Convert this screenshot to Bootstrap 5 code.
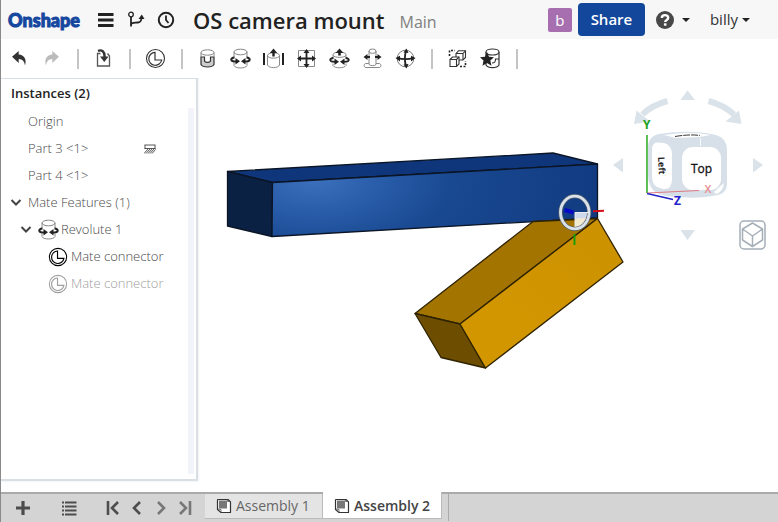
<!DOCTYPE html>
<html lang="en">
<head>
<meta charset="utf-8">
<meta name="viewport" content="width=device-width, initial-scale=1">
<title>OS camera mount</title>
<link href="https://cdn.jsdelivr.net/npm/bootstrap@5.3.0/dist/css/bootstrap.min.css" rel="stylesheet">
<style>
body{font-family:"Open Sans","Noto Sans",sans-serif;font-size:14px;color:#333;background:#fff;border-left:1px solid #8a8a8a;overflow:hidden}
button{font:inherit}
svg{display:block;flex:none}
.plain{border:0;background:none;padding:0;color:inherit;display:flex;align-items:center;justify-content:center}
.topbar{height:39px;background:#f7f7f7;padding:0 28px 0 7px}
.brand{font-family:Lato,"Open Sans",sans-serif;font-weight:900;font-size:18px;line-height:24px;color:#15479e;text-decoration:none;-webkit-text-stroke:1px #15479e;width:83px}
.topbar .hicon{width:30px;height:30px}
.doc-title{font-size:22px;line-height:32px;font-weight:600;color:#222;margin:0 0 0 12px}
.branch{font-size:16px;line-height:20px;color:#808080;margin:4px 0 0 15px}
.avatar{width:24px;height:24px;border-radius:2px;background:#a76fb0;color:#fff;font-size:15px;line-height:24px;text-align:center}
.share{width:67px;height:33px;border-radius:4px;background:#12479b;color:#fff;font-size:15px;font-weight:600;margin:0 11px 0 6px}
.user{font-size:15px;margin-left:20px}
.caret{width:0;height:0;border:4px solid transparent;border-top-color:#222;border-bottom:0}
.tools{height:39px;padding-left:1px}
.tool{width:33px;height:33px}
.split{width:19px;height:20px;display:flex;justify-content:center}
.split::before{content:"";width:2px;background:#c4c4c4}
.panel{width:197px;margin-bottom:11px;border:1px solid #dadfe4;border-width:1px 2px 2px 0;box-shadow:0 0 2px #dde4ea;padding-bottom:5px}
.panel h2{font-size:13px;line-height:29px;font-weight:600;color:#222;margin:0;padding-left:10px}
.track{width:6px;background:#f2f4f9;margin-right:2px}
.tree{font-weight:300;font-size:13px;line-height:27px;color:#4a4a4a}
.tree li{height:27px}
.lvl1{padding-left:27px}
.group1{padding-left:9px}
.group2{padding-left:19px}
.lvl3{padding-left:45px;gap:1px}
.chev{width:12px;height:20px;margin-right:6px}
.off{color:#a0a0a0}
.grounded{margin-left:auto;margin-right:32px}
.cube{position:absolute;top:0;right:0}
.iso{position:absolute;top:142px;right:12px}
.bottombar{height:30px;background:#d4d4d4;border-top:2px solid #aaa;color:#555}
.bottombar .nav-b{width:24px;height:28px}
.sheet{height:25px;border:0;border-right:1px solid #bbb;border-bottom:1px solid #bbb;background:#e4e4e4;color:#666;font-size:14px;line-height:20px;padding:0 0 0 11px;gap:4px}
.sheet.current{height:27px;margin-top:-2px;background:#fff;color:#444;font-weight:600;padding-top:2px}
.s1{width:118px}.s2{width:119px}
.endline{width:1px;height:27px;background:#aaa;margin-left:6px}
</style>
</head>
<body class="d-flex flex-column vh-100">
<svg width="0" height="0" class="position-absolute" aria-hidden="true">
<defs>
<symbol id="mateconn" viewBox="0 0 25 25"><g fill="none" stroke="currentColor"><circle cx="12.5" cy="12.5" r="9" stroke-width="1.1"/><path d="M12 6.300A6.500 6.500 0 1 0 18.700 14H12Z" stroke-width="1.200"/></g></symbol>
<symbol id="revolute" viewBox="0 0 25 25"><g fill="none" stroke="#888"><ellipse cx="12.5" cy="6" rx="6.500" ry="2.800"/><path d="M6 6V11M19 6V11M6 17V19.500C7 22.800 18 22.800 19 19.500V17"/></g><path d="M6.500 11.500C2 12 2 15.500 8 15.500M18.500 11.500C23 12 23 15.500 17 15.500" fill="none" stroke="#222" stroke-width="2"/><path d="M7.500 12L12 15.300L7.500 18.500ZM17.500 12L13 15.300L17.500 18.500Z" fill="#222"/></symbol>
<symbol id="sheeticon" viewBox="0 0 16 16"><path d="M2 1.500H12L14.500 4V14.500H5L1.500 11.500V2Z" fill="#fff" stroke="#333" stroke-width="1.200" stroke-linejoin="round"/><path d="M3 2.500H11V10.500H3Z" fill="#777"/><path d="M2 11L5 11.500V14.500M11.500 2V3.500H14" fill="none" stroke="#555" stroke-width=".8"/></symbol>
</defs>
</svg>

<header class="topbar d-flex align-items-center flex-shrink-0">
  <a class="brand" href="#">Onshape</a>
  <button class="plain hicon" aria-label="Menu"><svg width="16" height="16" viewBox="0 0 16 16"><path d="M0 2.500H15.500M0 8H15.500M0 13.500H15.500" stroke="#222" stroke-width="3"/></svg></button>
  <button class="plain hicon" aria-label="Versions"><svg width="18" height="18" viewBox="0 0 18 18"><g fill="none" stroke="#222" stroke-width="1.800"><circle cx="4" cy="3.500" r="2.300" stroke-width="1.300"/><path d="M4 6V15.500M4 14C4 11 8 12 11 11.500C14 11 14.500 9.500 14.500 6"/></g><path d="M11.500 8L14.800 3.500L17.500 8Z" fill="#222"/></svg></button>
  <button class="plain hicon" aria-label="History"><svg width="18" height="18" viewBox="0 0 18 18"><circle cx="9" cy="9" r="7.200" fill="none" stroke="#222" stroke-width="2"/><path d="M9 4.500V9L11.500 12" fill="none" stroke="#222" stroke-width="1.800"/></svg></button>
  <h1 class="doc-title">OS camera mount</h1>
  <span class="branch">Main</span>
  <div class="d-flex align-items-center ms-auto">
    <span class="avatar">b</span>
    <button class="plain share">Share</button>
    <button class="plain" aria-label="Help"><svg width="18" height="18" viewBox="0 0 18 18"><circle cx="9" cy="9" r="9" fill="#484848"/><path d="M5.800 7C5.800 3.200 12.200 3.200 12.200 6.800C12.200 9 9.200 8.800 9.200 11" fill="none" stroke="#fff" stroke-width="2.400"/><path d="M7.900 12.300H10.500V14.700H7.900Z" fill="#fff"/></svg><span class="caret ms-2"></span></button>
    <button class="plain user">billy<span class="caret ms-1"></span></button>
  </div>
</header>

<div class="tools d-flex align-items-center flex-shrink-0" role="toolbar" aria-label="Assembly tools">
  <button class="plain tool" aria-label="Undo"><svg width="25" height="25" viewBox="0 0 25 25"><path d="M6 10.700L12.700 5V8.500C18 9 21 13 19 19.500C18.500 15.500 16.500 13.300 12.700 13.100V17Z" fill="#333"/></svg></button>
  <button class="plain tool" aria-label="Redo"><svg width="25" height="25" viewBox="0 0 25 25"><path d="M20 10.700L13.300 5V8.500C8 9 5 13 7 19.500C7.500 15.500 9.500 13.300 13.300 13.100V17Z" fill="#bbb"/></svg></button>
  <span class="split"></span>
  <button class="plain tool" aria-label="Insert"><svg width="25" height="25" viewBox="0 0 25 25"><path d="M9.500 7.500H6.500V20H18.500V10L16.500 7.500" fill="none" stroke="#555" stroke-width="1.300"/><path d="M7 4.800C11 3.500 13.500 5.500 13.500 10V11" fill="none" stroke="#333" stroke-width="2.400"/><path d="M9 10.500H17.500L13.300 16Z" fill="#333"/></svg></button>
  <span class="split"></span>
  <button class="plain tool" aria-label="Mate connector"><svg width="25" height="25"><use href="#mateconn"/></svg></button>
  <span class="split"></span>
  <button class="plain tool" aria-label="Fastened mate"><svg width="25" height="25" viewBox="0 0 25 25"><path d="M6 11H9.500V14.500C9.500 17 15.500 17 15.500 14.500V11H19V18.500C17 21.800 8 21.800 6 18.500Z" fill="#ccc" stroke="#333" stroke-width="1.200"/><path d="M6 6.500V11M19 6.500V11" stroke="#888"/><ellipse cx="12.500" cy="6.500" rx="6.500" ry="2.700" fill="none" stroke="#888"/></svg></button>
  <button class="plain tool" aria-label="Revolute mate"><svg width="25" height="25"><use href="#revolute"/></svg></button>
  <button class="plain tool" aria-label="Slider mate"><svg width="25" height="25" viewBox="0 0 25 25"><path d="M3 7V19M22 7V19" stroke="#222" stroke-width="2"/><path d="M6.500 9.500V19C8 22.500 17 22.500 18.500 19V9.500" fill="none" stroke="#888"/><ellipse cx="12.500" cy="9.500" rx="6" ry="2.700" fill="none" stroke="#888"/><path d="M8.800 7L12.500 2.500L16.200 7H13.700V10.500H11.300V7Z" fill="#222"/></svg></button>
  <button class="plain tool" aria-label="Planar mate"><svg width="25" height="25" viewBox="0 0 25 25"><path d="M4.500 4.500H20.500V20.500H4.500Z" fill="none" stroke="#888"/><path d="M12.500 5V20M5 12.500H20" stroke="#222" stroke-width="1.800"/><path d="M12.500 3L15.500 7H9.500ZM12.500 22L15.500 18H9.500ZM3 12.500L7 9.500V15.500ZM22 12.500L18 9.500V15.500Z" fill="#222"/></svg></button>
  <button class="plain tool" aria-label="Cylindrical mate"><svg width="25" height="25" viewBox="0 0 25 25"><g fill="none" stroke="#888"><path d="M9 6.500C7 7 6 7.500 6 9V11.500M16 6.500C18 7 19 7.500 19 9V11.500M6 9.500C8 12 17 12 19 9.500M6 17.500V19.500C7.500 22.500 17.500 22.500 19 19.500V17.500"/></g><path d="M6.500 12C2 12.500 2 15.800 8 15.800M18.500 12C23 12.500 23 15.800 17 15.800" fill="none" stroke="#222" stroke-width="2"/><path d="M7.500 12.500L12 15.700L7.500 19ZM17.500 12.500L13 15.700L17.500 19ZM8.500 7L12.500 2.500L16.500 7H13.800V9.500H11.200V7Z" fill="#222"/></svg></button>
  <button class="plain tool" aria-label="Pin slot mate"><svg width="25" height="25" viewBox="0 0 25 25"><g fill="none" stroke="#888"><path d="M9 17.500H6C3.500 17.500 3.500 21.500 6 21.500H19C21.500 21.500 21.500 17.500 19 17.500H16"/><path d="M9 5V18.500C10 20 15 20 16 18.500V5"/><ellipse cx="12.500" cy="5.200" rx="3.500" ry="2.200"/></g><path d="M5 11H10M15 11H20" stroke="#222" stroke-width="1.800"/><path d="M3.500 11L7.500 8V14ZM21.500 11L17.500 8V14Z" fill="#222"/></svg></button>
  <button class="plain tool" aria-label="Ball mate"><svg width="25" height="25" viewBox="0 0 25 25"><circle cx="12.500" cy="12.500" r="8.300" fill="none" stroke="#777"/><path d="M13 5C11.500 9 11.500 16 13 20M5 12C9 13.500 16 13.500 20 12" fill="none" stroke="#222" stroke-width="1.800"/><path d="M13.500 2.500L15.500 7L10.500 6.500ZM13.500 22.500L10.500 18.500L15.500 18ZM2.500 12L7 9.700V15.500ZM22.500 12L18 9.700V15.500Z" fill="#222"/></svg></button>
  <span class="split"></span>
  <button class="plain tool" aria-label="Group"><svg width="25" height="25" viewBox="0 0 25 25"><path d="M4.500 10V4.500H10M15 20.500H20.500V15" fill="none" stroke="#222" stroke-width="1.600" stroke-dasharray="2 1.500"/><g fill="#fff" stroke="#333" stroke-width="1.100"><path d="M11 7.500L13.500 4.800H20.500V11.500L18 14H11Z"/><path d="M11 7.500H18V14M18 7.500L20.500 4.800" fill="none"/><path d="M5 13.500L7.500 11H14V18L11.500 20.500H5Z"/><path d="M5 13.500H11.500V20.500M11.500 13.500L14 11" fill="none"/></g></svg></button>
  <button class="plain tool" aria-label="Mate favourites"><svg width="25" height="25" viewBox="0 0 25 25"><g fill="#fff" stroke="#333" stroke-width="1.200"><path d="M8 6V19C10 22.500 19 22.500 21 19V6"/><ellipse cx="14.500" cy="6" rx="6.500" ry="3"/><path d="M14 17C17 17 17.500 16 17.500 13H21" fill="none"/></g><path d="M9 6L11 10.700L16 11.200L12.300 14.500L13.500 19.800L9 17L4.500 19.800L5.500 14.500L2 11.200L7 10.700Z" fill="#222"/></svg></button>
  <span class="split"></span>
</div>

<main class="d-flex flex-grow-1 overflow-hidden">
  <aside class="panel d-flex flex-column flex-shrink-0">
    <h2>Instances (2)</h2>
    <div class="d-flex flex-grow-1">
      <ul class="tree list-unstyled flex-grow-1 mb-0">
        <li class="lvl1">Origin</li>
        <li class="lvl1 d-flex align-items-center">Part 3 &lt;1&gt;<svg class="grounded" width="12" height="10" viewBox="0 0 12 10"><path d="M.5 1H11.500M.5 4.500H11.500M1 1V5M11 1V5M0 9.500L4 5M4 9.500L8 5M8 9.500L11.500 5.500M2 9.500L6 5M6 9.500L10 5" stroke="#444" stroke-width=".9"/></svg></li>
        <li class="lvl1">Part 4 &lt;1&gt;</li>
        <li class="group1 d-flex align-items-center"><button class="plain chev" aria-label="Collapse"><svg width="12" height="8" viewBox="0 0 12 8"><path d="M1.500 1L6 5.500L10.500 1" fill="none" stroke="#444" stroke-width="2"/></svg></button>Mate Features (1)</li>
        <li class="group2 d-flex align-items-center"><button class="plain chev me-0" aria-label="Collapse"><svg width="12" height="8" viewBox="0 0 12 8"><path d="M1.500 1L6 5.500L10.500 1" fill="none" stroke="#444" stroke-width="2"/></svg></button><svg class="ms-1" width="25" height="25"><use href="#revolute"/></svg>Revolute 1</li>
        <li class="lvl3 d-flex align-items-center"><svg width="24" height="24" class="text-black"><use href="#mateconn"/></svg>Mate connector</li>
        <li class="lvl3 d-flex align-items-center off"><svg width="24" height="24"><use href="#mateconn"/></svg>Mate connector</li>
      </ul>
      <div class="track"></div>
    </div>
  </aside>

  <section class="flex-grow-1 position-relative overflow-hidden" aria-label="Model view">
    <svg class="w-100 h-100" viewBox="198 78 580 413" preserveAspectRatio="xMinYMin meet">
      <defs>
        <radialGradient id="blueface" gradientUnits="userSpaceOnUse" cx="315" cy="180" r="300" gradientTransform="translate(0 90) scale(1 .5)"><stop offset="0" stop-color="#3c70bd"/><stop offset=".2" stop-color="#2a5eab"/><stop offset=".45" stop-color="#194991"/><stop offset="1" stop-color="#113a80"/></radialGradient>
        <linearGradient id="goldface" x1="0" x2="1" y1="1" y2="0"><stop offset="0" stop-color="#d39800"/><stop offset="1" stop-color="#cc9100"/></linearGradient>
      </defs>
      <g stroke="#0b1526" stroke-width="1.300" stroke-linejoin="round">
        <path d="M227.500 171.500L553 153L597.500 164L272.500 182.500Z" fill="#0f367a"/>
        <path d="M227.500 171.500L272.500 182.500L272 236.500L227.500 226Z" fill="#0b2144"/>
        <path d="M272.500 182.500L597.500 164V218L272 236.500Z" fill="url(#blueface)"/>
      </g>
      <g stroke="#2e2200" stroke-width="1.300" stroke-linejoin="round">
        <path d="M533 221.500L597.500 218.500L460 324L415 313.500Z" fill="#a37400"/>
        <path d="M415 313.500L460 324L485.500 368L441 357.500Z" fill="#6d4e00"/>
        <path d="M460 324L597.500 218.500L623 262L485.500 368Z" fill="url(#goldface)"/>
      </g>
      <path d="M575 212H589C589 221 583 228 575 228Z" fill="#f2ead0"/><path d="M575 212H589L588 218L575 218.500Z" fill="#cfd9ec"/>
      <ellipse cx="574.800" cy="212.500" rx="14.300" ry="16.300" fill="none" stroke="#56616d" stroke-width="4.200"/>
      <ellipse cx="574.800" cy="212.500" rx="14.300" ry="16.300" fill="none" stroke="#d9e1ea" stroke-width="2.800"/>
      <path d="M575 227V212.500H589" fill="none" stroke="#e8edf2"/>
      <path d="M564.500 210L573.500 212.500" stroke="#0808c8" stroke-width="4"/>
      <path d="M593 211.300L604 210.700" stroke="#d40d16" stroke-width="2"/>
      <path d="M574.500 234V245" stroke="#1c9c0a" stroke-width="2"/>
    </svg>

    <svg class="cube" width="168" height="172" viewBox="610 78 168 172" font-family="Open Sans, sans-serif" aria-label="View cube">
      <path d="M687.500 90.500L695 100H680.500ZM687.500 240L695 230H680.500ZM613 165L623 158V172.500ZM763 165L753 158V172.500Z" fill="#dae3ea"/>
      <path d="M667.500 101C656 104 648 109 642.500 114.500M708.500 101C720 104 728 109 734 114.500" fill="none" stroke="#dae3ea" stroke-width="6"/>
      <path d="M634 124L636.500 110.500L650 121.500ZM741.500 124L739 110.500L725.500 121.500Z" fill="#dae3ea"/>
      <path d="M659 134Q690 129 716 135Q727 138 727 150V185Q726 193 718 195Q700 199 680 197Q660 197 653 190Q648 184 648 175V148Q648 136 659 134Z" fill="#d7e0e9"/>
      <path d="M664 135Q690 131 711 135L699 137L676 138Z" fill="#fff"/>
      <path d="M675 136.500Q690 134 700 135.500" fill="none" stroke="#333" stroke-dasharray="7 1"/>
      <path d="M700.500 138V146" stroke="#f7fafc"/>
      <path d="M658 142.500L664 143Q672 145 672 155V179Q672 190 663 189L657 187Q652 184 652 176V150Q652 142 658 142.500Z" fill="#fff"/>
      <rect x="682" y="147" width="39" height="43" rx="11" fill="#fff"/>
      <path d="M714 192L724 183Q723 192 716 194Z" fill="#fff"/>
      <text x="691" y="173" font-size="12" fill="#111" stroke="#111" stroke-width=".3">Top</text>
      <text transform="translate(658 157) rotate(87)" font-size="9" font-weight="700" fill="#222">Left</text>
      <path d="M647 135V193" stroke="#35b02c" stroke-width="1.600"/><path d="M647 193L699 190.500" stroke="#de7b82"/><path d="M647 193.500L673 199.500" stroke="#2323c8" stroke-width="1.400"/>
      <text x="643" y="129" font-size="12" font-weight="700" fill="#18a018">Y</text>
      <text x="704.500" y="193" font-size="11" font-weight="600" fill="#e58a8e">X</text>
      <text x="674" y="205" font-size="12" font-weight="700" fill="#2222cf">Z</text>
    </svg>
    <button class="plain iso" aria-label="Named views"><svg width="27" height="30" viewBox="0 0 27 30"><g fill="none" stroke="#a6afb8" stroke-width="1.500" stroke-linejoin="round"><rect x="1" y="1" width="25" height="28" rx="4"/><path d="M13.500 3L23.500 9V20L13.500 26.500L3.500 20V9ZM3.500 9L13.500 16L23.500 9M13.500 16V26.500"/></g></svg></button>
  </section>
</main>

<footer class="bottombar d-flex flex-shrink-0">
  <button class="plain nav-b ms-2 me-4" aria-label="Add tab"><svg class="ms-1" width="16" height="16" viewBox="0 0 16 16"><path d="M8 1V15M1 8H15" stroke="#4d4d4d" stroke-width="3.200"/></svg></button>
  <button class="plain nav-b me-3" aria-label="Tab list"><svg width="16" height="16" viewBox="0 0 16 16"><path d="M1 2.500H15.500M1 6.500H15.500M1 10.500H15.500M1 14.500H15.500" stroke="#4d4d4d" stroke-width="2"/><path d="M3.500 1V16" stroke="#d4d4d4"/></svg></button>
  <div class="d-flex ms-1">
    <button class="plain nav-b" aria-label="First"><svg width="14" height="16" viewBox="0 0 14 16"><path d="M2 1V15M12 2L6 8L12 14" fill="none" stroke="#4d4d4d" stroke-width="2.600"/></svg></button>
    <button class="plain nav-b" aria-label="Previous"><svg width="14" height="16" viewBox="0 0 14 16"><path d="M10 2L4 8L10 14" fill="none" stroke="#4d4d4d" stroke-width="2.600"/></svg></button>
    <button class="plain nav-b" aria-label="Next"><svg width="14" height="16" viewBox="0 0 14 16"><path d="M4 2L10 8L4 14" fill="none" stroke="#777" stroke-width="2.600"/></svg></button>
    <button class="plain nav-b" aria-label="Last"><svg width="14" height="16" viewBox="0 0 14 16"><path d="M12 1V15M2 2L8 8L2 14" fill="none" stroke="#777" stroke-width="2.600"/></svg></button>
  </div>
  <nav class="d-flex ms-2" aria-label="Tabs">
    <button class="sheet s1 d-flex align-items-center"><svg width="16" height="16"><use href="#sheeticon"/></svg>Assembly 1</button>
    <button class="sheet s2 current d-flex align-items-center" aria-current="page"><svg width="16" height="16"><use href="#sheeticon"/></svg>Assembly 2</button>
  </nav>
  <span class="endline"></span>
</footer>
<script src="https://cdn.jsdelivr.net/npm/bootstrap@5.3.0/dist/js/bootstrap.bundle.min.js"></script>
</body>
</html>
